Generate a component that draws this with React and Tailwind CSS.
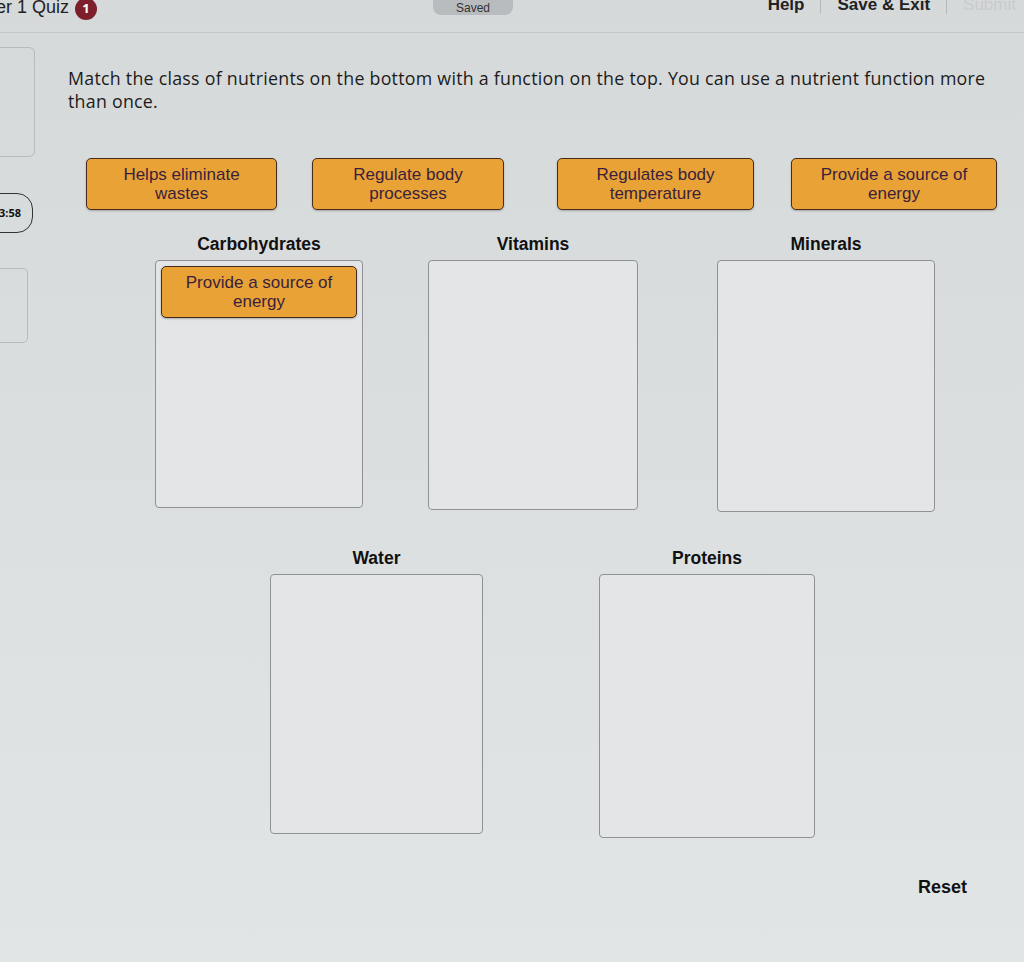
import React from "react";

const Card = ({ children, className = "" }) => (
  <div
    className={`flex items-center justify-center rounded-[5px] border border-[#4a2a1a] bg-[#e9a236] text-center text-[17px] leading-[19px] text-[#3b1f3c] shadow-[0_1px_2px_rgba(0,0,0,0.25)] ${className}`}
    style={{ fontFamily: '"Liberation Sans", Arial, sans-serif' }}
  >
    {children}
  </div>
);

const Column = ({ label, w, h, children, className = "" }) => (
  <div className={`flex flex-col items-center ${className}`} style={{ width: w }}>
    <div
      className="mb-[6px] text-[17.5px] font-bold leading-[20px] text-[#111]"
      style={{ fontFamily: '"Liberation Sans", Arial, sans-serif' }}
    >
      {label}
    </div>
    <div
      className="w-full rounded-[4px] border border-[#8f9294] bg-[#e3e5e6] p-[5px]"
      style={{ height: h }}
    >
      {children}
    </div>
  </div>
);

export default function App() {
  return (
    <div
      className="relative h-[962px] w-[1024px] overflow-hidden bg-gradient-to-b from-[#d6d9da] via-[#dcdfe0] to-[#e2e5e5]"
      style={{ fontFamily: '"Open Sans", sans-serif' }}
    >
      {/* top bar */}
      <div className="flex h-[33px] items-start border-b border-[#c4c7c9]">
        <div className="-mt-[6px] flex items-center">
          <span className="-ml-[4px] text-[18px] text-[#222]" style={{ fontFamily: '"Liberation Sans", Arial, sans-serif' }}>
            er 1 Quiz
          </span>
          <span className="ml-[6px] mt-[2px] flex h-[22px] w-[22px] items-center justify-center rounded-full bg-[#7c1f2b] text-[13px] font-bold text-white">
            1
          </span>
        </div>
        <div className="ml-[336px] flex h-[15px] w-[80px] items-end justify-center overflow-hidden rounded-b-[8px] bg-[#b9bcbe]">
          <span className="-mb-[2px] text-[12px] text-[#333]" style={{ fontFamily: '"Liberation Sans", Arial, sans-serif' }}>Saved</span>
        </div>
        <div className="-mt-[8px] ml-auto mr-[8px] flex items-center text-[17px] font-bold text-[#222]" style={{ fontFamily: '"Liberation Sans", Arial, sans-serif' }}>
          <span>Help</span>
          <span className="mx-[16px] h-[18px] w-px bg-[#b5b8ba]" />
          <span>Save &amp; Exit</span>
          <span className="mx-[16px] h-[18px] w-px bg-[#b5b8ba]" />
          <span className="font-normal text-[#c8cbcc]">Submit</span>
        </div>
      </div>

      <div className="flex">
        {/* left sidebar */}
        <div className="flex w-[40px] flex-col">
          <div className="-ml-[6px] mt-[14px] h-[110px] w-[41px] rounded-[6px] border border-[#b8bbbd]" />
          <div className="-ml-[8px] mt-[36px] flex h-[40px] w-[41px] items-center justify-start overflow-hidden rounded-r-[16px] border border-[#333]">
            <span className="ml-[6px] text-[11px] font-bold text-[#111]">3:58</span>
          </div>
          <div className="-ml-[8px] mt-[35px] h-[75px] w-[36px] rounded-[5px] border border-[#b8bbbd]" />
        </div>

        {/* main content */}
        <div className="ml-[28px] flex flex-1 flex-col">
          <p className="mt-[34px] w-[945px] text-[17.8px] leading-[23px] tracking-[0.26px] text-[#1c1c1c]">
            Match the class of nutrients on the bottom with a function on the top. You can use a nutrient function more than once.
          </p>

          {/* function cards */}
          <div className="ml-[18px] mt-[45px] flex">
            <Card className="h-[52px] w-[191px]">Helps eliminate<br />wastes</Card>
            <Card className="ml-[35px] h-[52px] w-[192px]">Regulate body<br />processes</Card>
            <Card className="ml-[53px] h-[52px] w-[197px]">Regulates body<br />temperature</Card>
            <Card className="ml-[37px] h-[52px] w-[206px]">Provide a source of<br />energy</Card>
          </div>

          {/* row 1 */}
          <div className="ml-[87px] mt-[24px] flex">
            <Column label="Carbohydrates" w={208} h={248}>
              <Card className="h-[52px] w-full">Provide a source of<br />energy</Card>
            </Column>
            <Column label="Vitamins" w={210} h={250} className="ml-[65px]" />
            <Column label="Minerals" w={218} h={252} className="ml-[79px]" />
          </div>

          {/* row 2 */}
          <div className="ml-[202px] mt-[36px] flex">
            <Column label="Water" w={213} h={260} />
            <Column label="Proteins" w={216} h={264} className="ml-[116px]" />
          </div>

          <div className="mt-[36px] flex justify-end pr-[57px]">
            <span className="text-[18px] font-bold text-[#111]" style={{ fontFamily: '"Liberation Sans", Arial, sans-serif' }}>
              Reset
            </span>
          </div>
        </div>
      </div>
    </div>
  );
}
